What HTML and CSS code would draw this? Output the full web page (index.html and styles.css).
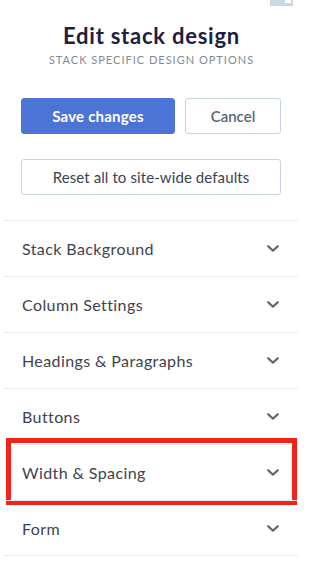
FILE: index.html
```html
<!DOCTYPE html>
<html>
<head>
<meta charset="utf-8">
<link rel="stylesheet" href="styles.css">
</head>
<body>
<div class="panel">
  <div class="topbar"><span class="corner-icon"><span class="corner-inner"></span></span></div>
  <header class="head">
    <h1 class="title">Edit stack design</h1>
    <p class="subtitle">STACK SPECIFIC DESIGN OPTIONS</p>
  </header>
  <div class="actions">
    <button class="btn btn-primary">Save changes</button>
    <button class="btn btn-outline btn-cancel">Cancel</button>
  </div>
  <div class="reset-wrap">
    <button class="btn btn-outline btn-reset">Reset all to site-wide defaults</button>
  </div>
  <ul class="sections">
    <li class="row"><span class="label">Stack Background</span><svg class="chev" viewBox="0 0 12 7" width="12" height="7"><polyline points="1.2,1.2 6,5.6 10.8,1.2"/></svg></li>
    <li class="row"><span class="label">Column Settings</span><svg class="chev" viewBox="0 0 12 7" width="12" height="7"><polyline points="1.2,1.2 6,5.6 10.8,1.2"/></svg></li>
    <li class="row"><span class="label">Headings &amp; Paragraphs</span><svg class="chev" viewBox="0 0 12 7" width="12" height="7"><polyline points="1.2,1.2 6,5.6 10.8,1.2"/></svg></li>
    <li class="row"><span class="label">Buttons</span><svg class="chev" viewBox="0 0 12 7" width="12" height="7"><polyline points="1.2,1.2 6,5.6 10.8,1.2"/></svg></li>
    <li class="row row-highlight"><span class="label">Width &amp; Spacing</span><svg class="chev" viewBox="0 0 12 7" width="12" height="7"><polyline points="1.2,1.2 6,5.6 10.8,1.2"/></svg><span class="highlight-box"></span></li>
    <li class="row row-last"><span class="label">Form</span><svg class="chev" viewBox="0 0 12 7" width="12" height="7"><polyline points="1.2,1.2 6,5.6 10.8,1.2"/></svg></li>
  </ul>
</div>
</body>
</html>
```
FILE: styles.css
```css
* { box-sizing: border-box; }
html, body {
  margin: 0;
  padding: 0;
  background: #ffffff;
}
body {
  font-family: Lato, "Open Sans", "Liberation Sans", sans-serif;
  width: 303px;
}
.panel {
  display: flex;
  flex-direction: column;
}
.topbar {
  height: 6px;
  display: flex;
  justify-content: flex-end;
  padding-right: 10px;
}
.corner-icon {
  width: 23px;
  height: 6px;
  background: #c9d8e5;
  display: flex;
  justify-content: flex-end;
  padding-right: 2px;
}
.corner-inner {
  width: 6px;
  height: 3px;
  background: #ffffff;
}
.head {
  margin-top: 16px;
  text-align: center;
}
.title {
  margin: 0;
  font-size: 22px;
  line-height: 28px;
  font-weight: 700;
  letter-spacing: 0.75px;
  color: #1b2140;
}
.subtitle {
  margin: 3px 0 0;
  font-size: 11px;
  line-height: 14px;
  letter-spacing: 1px;
  color: #7f8a97;
}
.actions {
  display: flex;
  gap: 10px;
  margin-top: 31px;
  padding: 0 22px 0 21px;
}
.btn {
  font-family: inherit;
  height: 36px;
  border-radius: 3px;
  font-size: 15px;
  cursor: pointer;
  margin: 0;
}
.btn-primary {
  width: 154px;
  background: #4b74d6;
  border: 1px solid #4b74d6;
  color: #ffffff;
  font-weight: 700;
  letter-spacing: 0.2px;
}
.btn-outline {
  background: #ffffff;
  border: 1px solid #c8d5e1;
}
.btn-cancel {
  width: 96px;
  color: #5b6574;
  font-weight: 600;
}
.reset-wrap {
  margin-top: 25px;
  padding: 0 22px 0 21px;
  display: flex;
}
.btn-reset {
  width: 260px;
  color: #3d4350;
  font-size: 15px;
  letter-spacing: 0.1px;
}
.sections {
  list-style: none;
  margin: 25px 5px 0 4px;
  padding: 0;
}
.row {
  position: relative;
  height: 56px;
  border-top: 1px solid #e6ebf1;
  display: flex;
  align-items: center;
  justify-content: space-between;
  padding: 0 19px 0 18px;
}
.row-last {
  border-bottom: 1px solid #e6ebf1;
}
.label {
  font-size: 16px;
  color: #3d4350;
  letter-spacing: 0.4px;
}
.chev {
  fill: none;
  stroke: #5c6878;
  stroke-width: 2.2;
  stroke-linecap: round;
  stroke-linejoin: round;
}
.highlight-box {
  position: absolute;
  left: 2px;
  top: -7px;
  width: 291px;
  height: 67px;
  border: 5px solid #f5211b;
  pointer-events: none;
}
```
